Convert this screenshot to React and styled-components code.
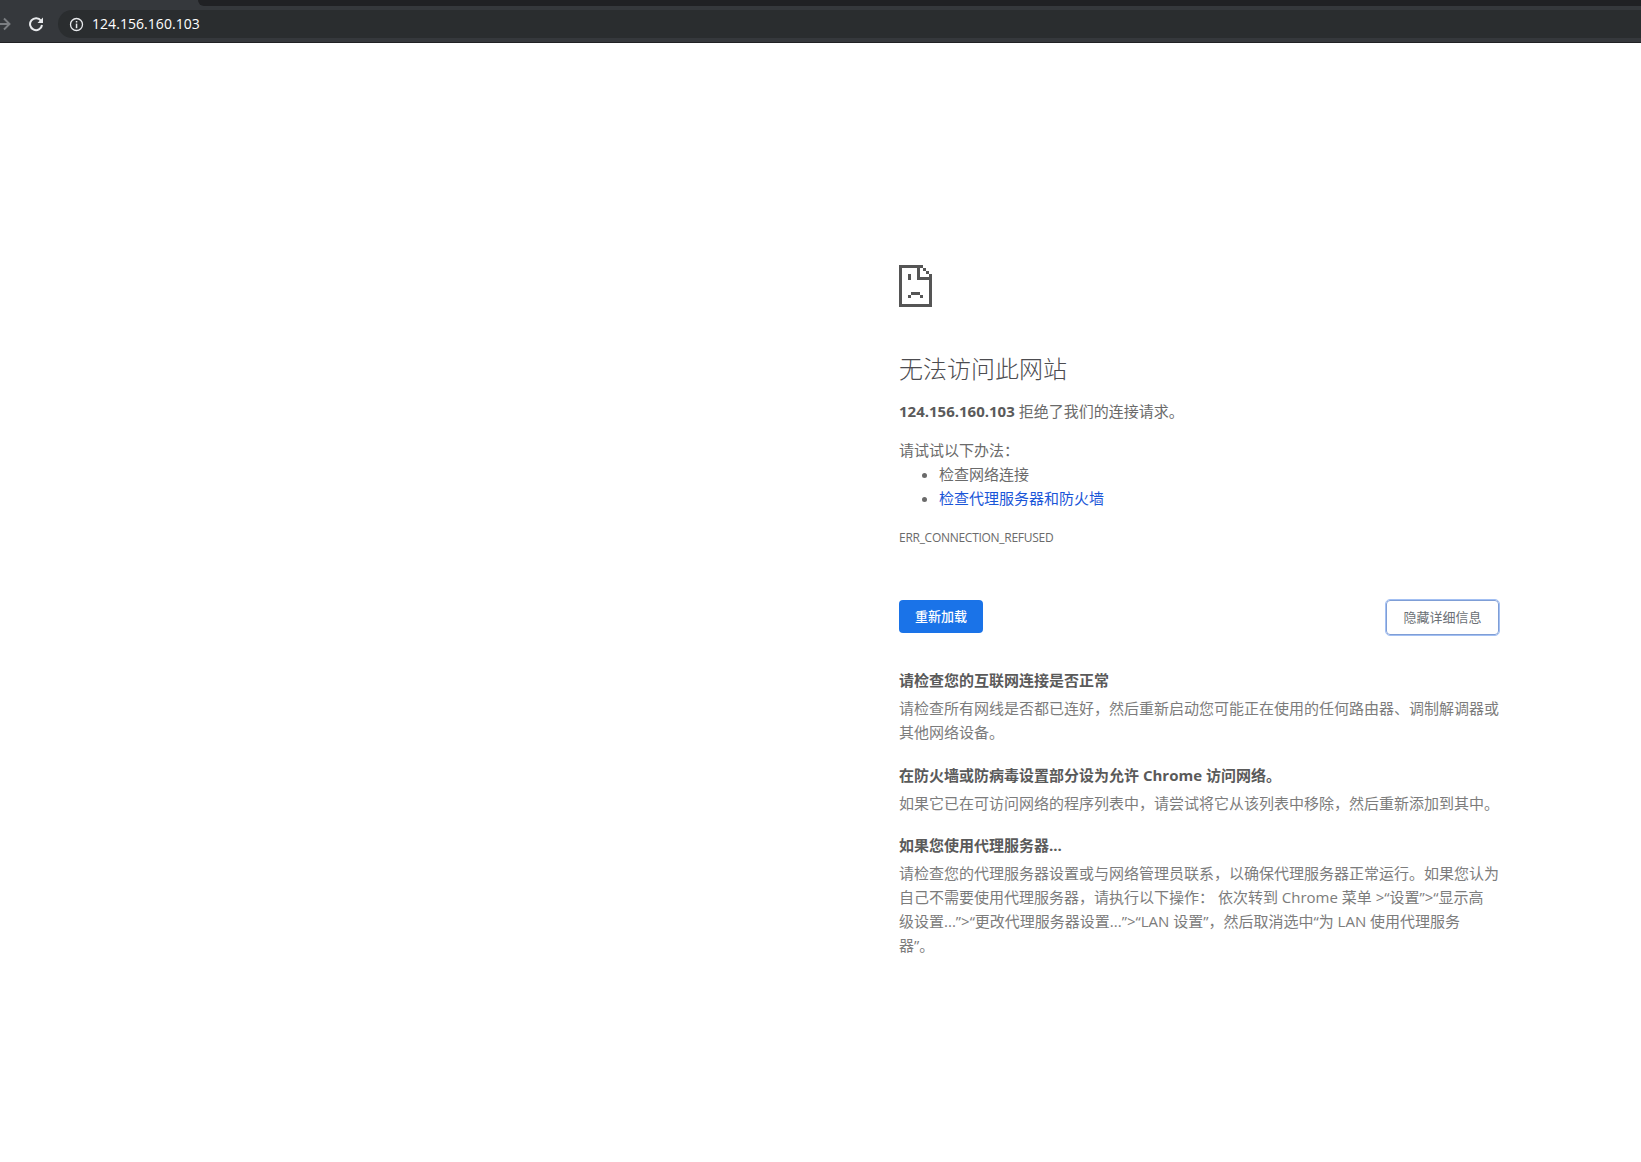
import React from "react";
import styled, { createGlobalStyle } from "styled-components";

const Global = createGlobalStyle`
  html, body { margin: 0; padding: 0; background: #fff; }
  body { font-family: "Open Sans", "Noto Sans CJK SC", sans-serif; color: #6a6a6a; font-size: 15px; }
`;
const Page = styled.div`
  width: 1641px;
  height: 1162px;
  overflow: hidden;
  display: flex;
  flex-direction: column;
`;
const Chrome = styled.header`
  height: 43px;
  background: #35383c;
  display: flex;
  flex-direction: column;
  border-bottom: 1px solid #202124;
  box-sizing: border-box;
`;
const TabStrip = styled.div`
  height: 6px;
  margin-left: 198px;
  background: #202124;
  border-bottom-left-radius: 6px;
`;
const Toolbar = styled.div`
  flex: 1;
  display: flex;
  align-items: center;
  padding: 4px 0;
`;
const NavIcons = styled.div`
  display: flex;
  align-items: center;
  width: 58px;
  flex: none;
`;
const Forward = styled.svg`
  width: 12px;
  height: 14px;
  margin: 0 17px 0 -1px;
`;
const Reload = styled.svg`
  width: 16px;
  height: 16px;
`;
const Omnibox = styled.div`
  flex: 1;
  height: 28px;
  background: #2a2d2f;
  border-radius: 14px 0 0 14px;
  display: flex;
  align-items: center;
  padding-left: 11px;
  gap: 8px;
  color: #fff;
  font: 14px/28px "Open Sans", sans-serif;
  letter-spacing: 0.05px;
`;
const InfoIcon = styled.svg`
  width: 15px;
  height: 15px;
  flex: none;
`;
const Main = styled.main`
  flex: 1;
  display: flex;
  flex-direction: column;
  padding: 222px 0 0 899px;
`;
const Column = styled.div`
  width: 600px;
  line-height: 24px;
`;
const SadIcon = styled.svg`
  display: block;
  width: 33px;
  height: 42px;
  margin-bottom: 44px;
`;
const Title = styled.h1`
  margin: 0 0 12px;
  font-size: 24px;
  font-weight: 300;
  line-height: 36px;
  color: #4c4c50;
`;
const Para = styled.p`
  margin: 0;
`;
const Lead = styled(Para)`
  margin-bottom: 15px;
`;
const Strong = styled.strong`
  font-weight: 700;
  color: #5a5a5a;
`;
const Hints = styled.ul`
  margin: 0;
  padding-left: 40px;
  list-style: disc;
`;
const Link = styled.a`
  color: #1a56d8;
  text-decoration: none;
`;
const Code = styled.div`
  margin-top: 16px;
  font-size: 12px;
  letter-spacing: -0.28px;
  line-height: 24px;
`;
const Buttons = styled.div`
  display: flex;
  justify-content: space-between;
  align-items: flex-start;
  margin-top: 50px;
`;
const Primary = styled.button`
  width: 84px;
  height: 33px;
  border: 0;
  border-radius: 4px;
  background: #1a73e8;
  color: #fff;
  font: 500 13px/33px "Open Sans", "Noto Sans CJK SC", sans-serif;
  padding: 0;
`;
const Secondary = styled.button`
  width: 113px;
  height: 35px;
  box-sizing: border-box;
  background: #fff;
  border: 1px solid #7f9ed6;
  outline: 1px solid #a3c0f3;
  outline-offset: 0;
  border-radius: 4px;
  color: #6b7075;
  font: 400 13px/33px "Open Sans", "Noto Sans CJK SC", sans-serif;
  padding: 0;
`;
const Details = styled.section`
  margin-top: 33px;
`;
const DetailTitle = styled.div`
  font-weight: 700;
  color: #5a5a5a;
`;
const DetailText = styled.p`
  margin: 4px 0 ${(p) => p.$after}px;
  color: #7c7c7c;
`;

const sadRects = [
  [0,0,21,3],[0,0,3,42],[0,39,33,3],[30,9,3,33],[18,0,3,15],[18,12,15,3],[21,0,3,3],[24,3,3,3],[27,6,3,3],
  [9,9,3,6],[12,27,9,3],[9,30,3,3],[21,30,3,3]
];

export default function App() {
  return (
    <Page>
      <Global />
      <Chrome>
        <TabStrip />
        <Toolbar>
          <NavIcons>
            <Forward viewBox="0 0 12 14">
              <path d="M0 7h10M5 1.5L10.5 7 5 12.5" fill="none" stroke="#7b7e82" strokeWidth="1.9" />
            </Forward>
            <Reload viewBox="0 0 16 16">
              <path d="M13 4.8A6 6 0 1 0 14 9" fill="none" stroke="#e8eaed" strokeWidth="2" />
              <path d="M15 1.5V7H9.5z" fill="#e8eaed" />
            </Reload>
          </NavIcons>
          <Omnibox>
            <InfoIcon viewBox="0 0 15 15">
              <circle cx="7.5" cy="7.5" r="6" fill="none" stroke="#e8eaed" strokeWidth="1.3" />
              <rect x="6.8" y="6.6" width="1.5" height="4.6" fill="#e8eaed" />
              <rect x="6.8" y="4" width="1.5" height="1.5" fill="#e8eaed" />
            </InfoIcon>
            124.156.160.103
          </Omnibox>
        </Toolbar>
      </Chrome>
      <Main>
        <Column>
          <SadIcon viewBox="0 0 33 42" shapeRendering="crispEdges">
            {sadRects.map(([x, y, w, h], i) => (
              <rect key={i} x={x} y={y} width={w} height={h} fill="#555" />
            ))}
          </SadIcon>
          <Title>无法访问此网站</Title>
          <Lead><Strong>124.156.160.103</Strong> 拒绝了我们的连接请求。</Lead>
          <Para>请试试以下办法：</Para>
          <Hints>
            <li>检查网络连接</li>
            <li><Link>检查代理服务器和防火墙</Link></li>
          </Hints>
          <Code>ERR_CONNECTION_REFUSED</Code>
          <Buttons>
            <Primary>重新加载</Primary>
            <Secondary>隐藏详细信息</Secondary>
          </Buttons>
          <Details>
            <DetailTitle>请检查您的互联网连接是否正常</DetailTitle>
            <DetailText $after={19}>请检查所有网线是否都已连好，然后重新启动您可能正在使用的任何路由器、调制解调器或其他网络设备。</DetailText>
            <DetailTitle>在防火墙或防病毒设置部分设为允许 Chrome 访问网络。</DetailTitle>
            <DetailText $after={18}>如果它已在可访问网络的程序列表中，请尝试将它从该列表中移除，然后重新添加到其中。</DetailText>
            <DetailTitle>如果您使用代理服务器...</DetailTitle>
            <DetailText $after={18}>请检查您的代理服务器设置或与网络管理员联系，以确保代理服务器正常运行。如果您认为自己不需要使用代理服务器，请执行以下操作： 依次转到 Chrome 菜单 &gt;“设置”&gt;“显示高<br />级设置...”&gt;“更改代理服务器设置...”&gt;“LAN 设置”，然后取消选中“为 LAN 使用代理服务<br />器”。</DetailText>
          </Details>
        </Column>
      </Main>
    </Page>
  );
}
